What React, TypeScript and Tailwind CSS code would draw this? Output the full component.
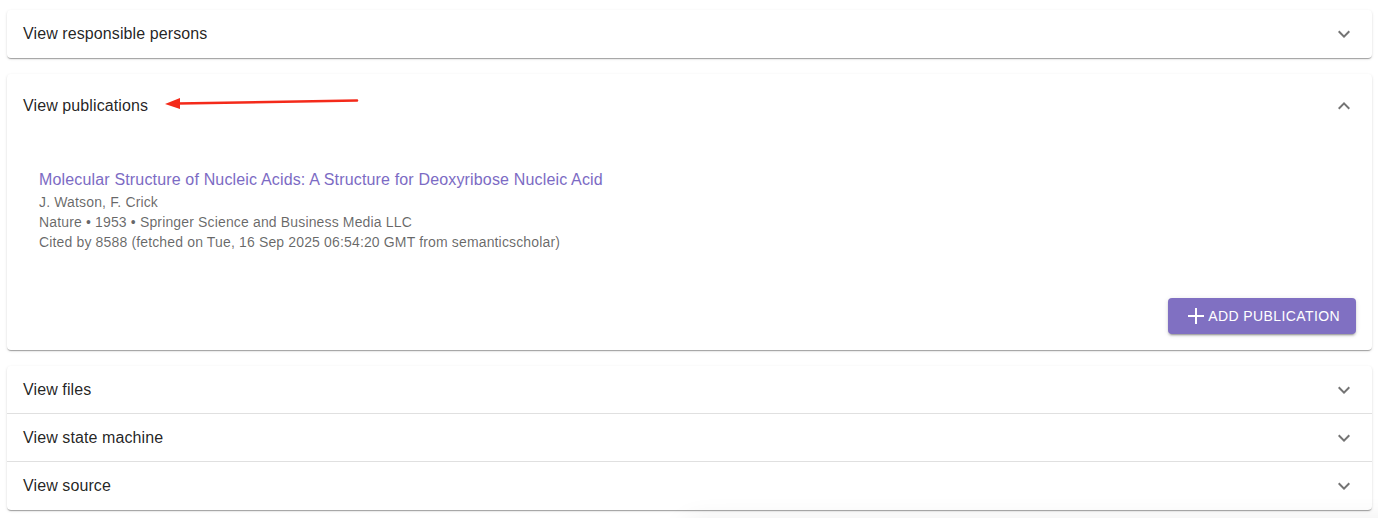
import React from 'react';

const font = { fontFamily: '"Liberation Sans", Arial, Helvetica, sans-serif' };

const paper =
  'bg-white shadow-[0px_2px_1px_-1px_rgba(0,0,0,0.2),0px_1px_1px_0px_rgba(0,0,0,0.14),0px_1px_3px_0px_rgba(0,0,0,0.12)] rounded-[4px]';

function Chevron({ up = false }: { up?: boolean }) {
  return (
    <svg viewBox="0 0 24 24" className={`h-6 w-6 fill-black/55 ${up ? 'rotate-180' : ''}`}>
      <path d="M16.59 8.59 12 13.17 7.41 8.59 6 10l6 6 6-6z" />
    </svg>
  );
}

function SummaryRow({ label, up = false, tall = false }: { label: string; up?: boolean; tall?: boolean }) {
  return (
    <div className={`flex items-center justify-between px-4 ${tall ? 'h-16' : 'h-12'}`}>
      <span className="text-[16px] tracking-[0.1px] text-black/[0.87]">{label}</span>
      <Chevron up={up} />
    </div>
  );
}

export default function App() {
  return (
    <div className="relative h-[518px] overflow-hidden bg-white" style={font}>
      <div className="flex flex-col gap-4 pl-[7px] pr-[6px] pt-[10px]">
        <div className={paper}>
          <SummaryRow label="View responsible persons" />
        </div>

        <div className={paper}>
          <SummaryRow label="View publications" up tall />
          <div className="px-4 pb-4 pt-2">
            <div className="px-4 pt-[23px]">
              <div className="text-[16px] leading-[22px] tracking-[0.16px] text-[#7c6bc4]">
                Molecular Structure of Nucleic Acids: A Structure for Deoxyribose Nucleic Acid
              </div>
              <div className="mt-px text-[14px] leading-[20px] tracking-[0.15px] text-black/60">
                <div>J. Watson, F. Crick</div>
                <div>Nature • 1953 • Springer Science and Business Media LLC</div>
                <div>Cited by 8588 (fetched on Tue, 16 Sep 2025 06:54:20 GMT from semanticscholar)</div>
              </div>
            </div>
            <div className="mt-[46px] flex justify-end">
              <button
                type="button"
                className="flex h-9 items-center gap-1 rounded-[4px] bg-[#8070c2] pl-5 pr-4 text-[14px] uppercase tracking-[0.4px] text-white shadow-[0px_3px_1px_-2px_rgba(0,0,0,0.2),0px_2px_2px_0px_rgba(0,0,0,0.14),0px_1px_5px_0px_rgba(0,0,0,0.12)]"
              >
                <svg viewBox="0 0 16 16" className="h-4 w-4">
                  <path d="M8 0v16M0 8h16" stroke="white" strokeWidth="2" />
                </svg>
                Add publication
              </button>
            </div>
          </div>
        </div>

        <div className={`${paper} divide-y divide-black/[0.12]`}>
          <SummaryRow label="View files" />
          <SummaryRow label="View state machine" />
          <SummaryRow label="View source" />
        </div>
      </div>

      {/* annotation arrow */}
      <svg className="pointer-events-none absolute left-[160px] top-[92px]" width="205" height="20" viewBox="0 0 205 20">
        <path d="M18 11.5 L197 8.5" stroke="#f42a1a" strokeWidth="2.6" strokeLinecap="round" />
        <path d="M5 12 L20 6 L20 17 Z" fill="#f42a1a" />
      </svg>

      {/* faint shadow of a floating element below the viewport */}
      <div className="pointer-events-none absolute left-[690px] top-[528px] h-20 w-[760px] rounded-lg bg-white shadow-[0_0_28px_6px_rgba(0,0,0,0.09)]" />
    </div>
  );
}
